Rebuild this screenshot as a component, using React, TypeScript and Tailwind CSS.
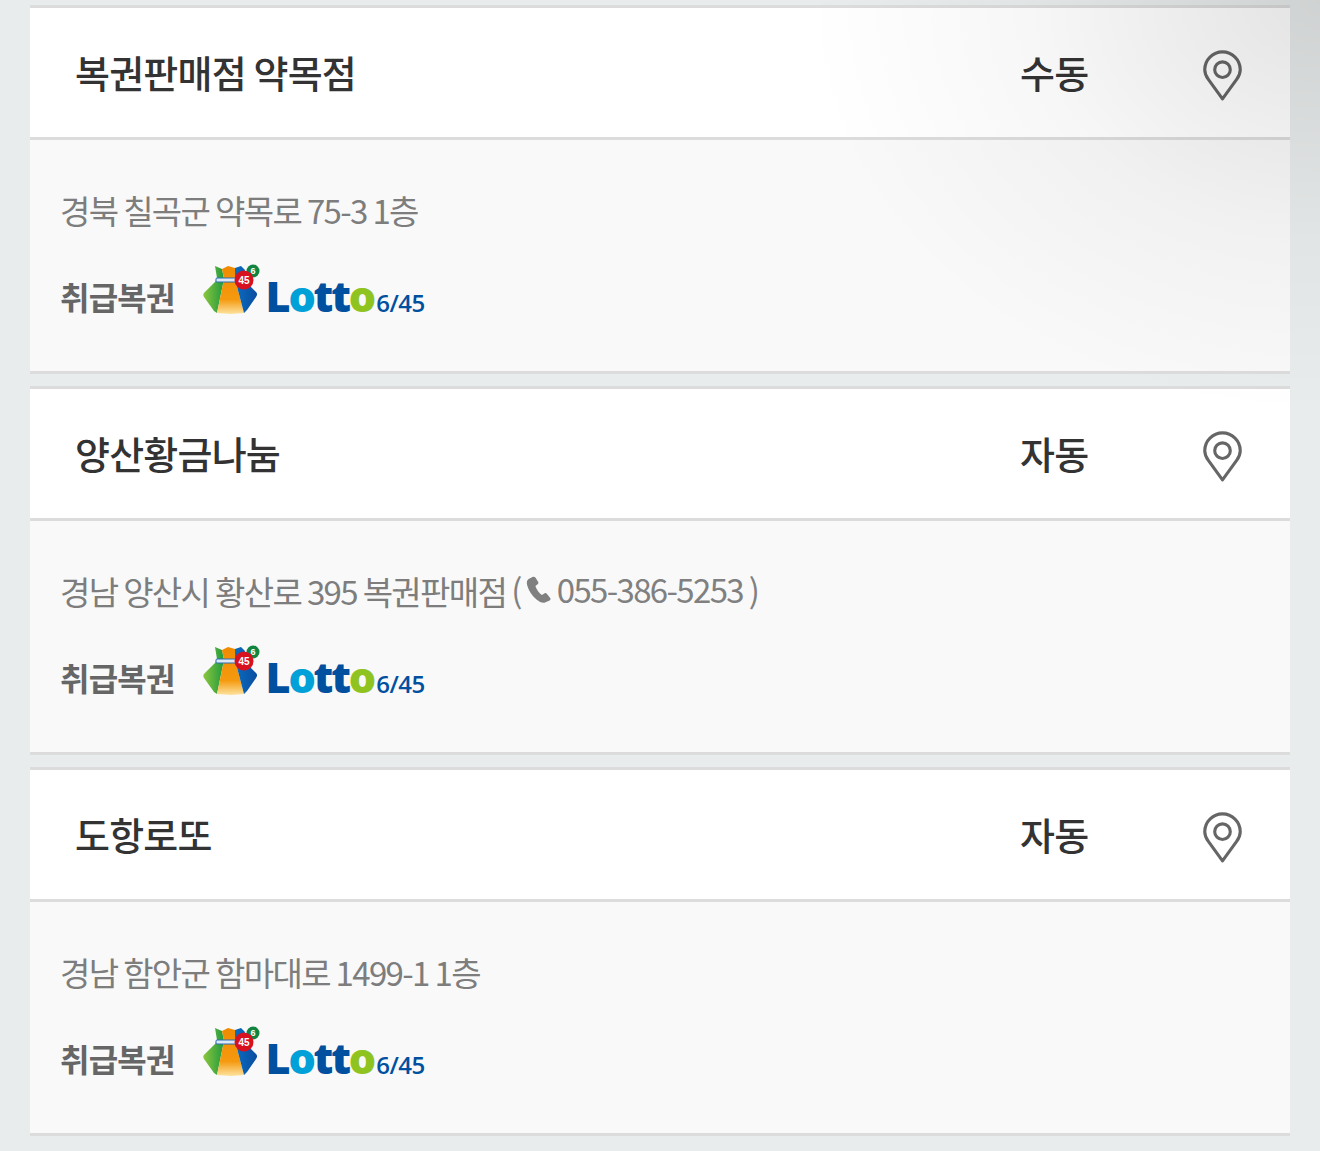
const stores = [
  {
    name: "복권판매점 약목점",
    type: "수동",
    address: "경북 칠곡군 약목로 75-3 1층",
  },
  {
    name: "양산황금나눔",
    type: "자동",
    address: "경남 양산시 황산로 395 복권판매점",
    phone: "055-386-5253",
  },
  {
    name: "도항로또",
    type: "자동",
    address: "경남 함안군 함마대로 1499-1 1층",
  },
];

const PinIcon = () => (
  <svg width="39" height="51" viewBox="0 0 40 52" fill="none" stroke="#666" strokeWidth="3.2">
    <path d="M20 50 L5.5 30 C3 26.5 1.8 23.5 1.8 20 C1.8 9.8 10 1.8 20 1.8 C30 1.8 38.2 9.8 38.2 20 C38.2 23.5 37 26.5 34.5 30 Z" strokeLinejoin="round" />
    <circle cx="20" cy="20" r="8" />
  </svg>
);

const PhoneIcon = () => (
  <svg width="26" height="28" viewBox="0 0 26 28" fill="#808080">
    <path d="M6.5 1 L2.6 3 C0.6 4.2 0.4 7 1.4 10 C3 15 6 19.5 10.5 23.5 C13.5 26 16.5 27.4 19 26.6 L23.6 24.4 C24.6 23.8 24.8 22.9 24.2 22 L20.8 17.8 C20.2 17 19.3 16.8 18.4 17.4 L15.8 19 C13 17.2 10.4 13.4 9.4 10 L11.6 8.2 C12.4 7.6 12.6 6.8 12.2 5.9 L9.6 1.8 C8.9 0.8 7.6 0.5 6.5 1 Z" />
  </svg>
);

const BagIcon = () => (
  <svg width="58" height="52" viewBox="0 0 58 52">
    <defs>
      <linearGradient id="bagGreen" x1="0" y1="0" x2="1" y2="0">
        <stop offset="0" stopColor="#8cc63f" />
        <stop offset="1" stopColor="#1f9a3c" />
      </linearGradient>
      <linearGradient id="bagOrange" x1="0" y1="0" x2="0" y2="1">
        <stop offset="0" stopColor="#f08a00" />
        <stop offset="0.7" stopColor="#f59a10" />
        <stop offset="1" stopColor="#fde3a0" />
      </linearGradient>
      <linearGradient id="bagBlue" x1="0" y1="0" x2="1" y2="0">
        <stop offset="0" stopColor="#0a6cc0" />
        <stop offset="1" stopColor="#0a4da0" />
      </linearGradient>
    </defs>
    <path d="M13 2 L20 5 L22 15 L15 49 L12 47 L2 33 C1 31 1 29.6 2.4 28.4 L13 18 L15 14 Z" fill="url(#bagGreen)" />
    <path d="M20 5 L26 2 L33 4 L33 15 L42 49 L29 50 L15 49 L22 15 Z" fill="url(#bagOrange)" />
    <path d="M33 4 L39 2 L43 6 L41 14 L44 18 L54 28 C55.4 29.4 55.4 31 54 33 L45 46 L42 49 L33 15 Z" fill="url(#bagBlue)" />
    <rect x="14" y="14" width="25" height="4" rx="1" fill="#dbe9f7" stroke="#2a6cb5" strokeWidth="1" />
    <circle cx="51" cy="7" r="6.5" fill="#11853f" />
    <text x="51" y="10" textAnchor="middle" fontSize="9" fontWeight="700" fill="#fff" fontFamily="Liberation Sans, sans-serif">6</text>
    <circle cx="42" cy="16" r="9.5" fill="#d7111f" />
    <text x="42" y="19.5" textAnchor="middle" fontSize="10" fontWeight="700" fill="#fff" fontFamily="Liberation Sans, sans-serif">45</text>
  </svg>
);

const LottoLogo = () => (
  <div className="flex items-end gap-[6px]">
    <BagIcon />
    <div className="mb-[-1px] flex items-baseline leading-none font-['Open_Sans',sans-serif] font-extrabold">
      <span className="text-[43px] tracking-[-2.2px] text-[#0050a0]">L</span>
      <span className="text-[43px] tracking-[-2.2px] text-[#00a0d8]">o</span>
      <span className="text-[43px] tracking-[-2.2px] text-[#0050a0]">tt</span>
      <span className="text-[43px] tracking-[-1px] text-[#8fc31f]">o</span>
      <span className="ml-[1px] text-[24px] font-semibold tracking-[-0.5px] text-[#0050a0]">6/45</span>
    </div>
  </div>
);

const StoreCard = ({ store }: { store: (typeof stores)[number] }) => (
  <div className="border-y-[3px] border-[#dcdcdc] bg-[#f9f9f9]">
    <div className="flex h-[132px] items-center border-b-[3px] border-[#dcdcdc] bg-white pl-[45px]">
      <h3 className="flex-1 pb-[2px] text-[38px] font-medium tracking-[-0.8px] text-[#333]">{store.name}</h3>
      <span className="w-[183px] pb-[2px] text-[38px] font-medium tracking-[-0.8px] text-[#333]">{store.type}</span>
      <div className="mt-[6px] mr-[47px] flex w-[40px]">
        <PinIcon />
      </div>
    </div>
    <div className="flex h-[231px] flex-col px-[31px] pt-[47px]">
      <p className="-ml-[1px] flex h-[48px] items-center text-[33px] font-normal tracking-[-1.65px] text-[#7d7d7d]">
        {store.address}
        {store.phone && (
          <span className="mb-[5px] ml-[5px] flex items-center text-[#808080]">
            (<span className="mx-[5px]"><PhoneIcon /></span>{store.phone} )
          </span>
        )}
      </p>
      <div className="mt-[27px] -ml-[1px] flex h-[56px] items-center gap-[27px]">
        <span className="mt-[12px] text-[32px] font-bold tracking-[-0.8px] text-[#666]">취급복권</span>
        <LottoLogo />
      </div>
    </div>
  </div>
);

export default function App() {
  return (
    <div className="relative h-[1151px] overflow-hidden bg-[#e9ecec] font-['Noto_Sans_CJK_KR','Noto_Sans',sans-serif] antialiased">
      <div className="flex flex-col gap-[12px] px-[30px] pt-[5px]">
        {stores.map((store) => (
          <StoreCard key={store.name} store={store} />
        ))}
      </div>
      {/* shadow that falls from the top right corner */}
      <div className="pointer-events-none absolute top-0 right-0 h-[420px] w-[520px] bg-[radial-gradient(ellipse_at_100%_0%,rgba(0,0,0,0.11)_0%,rgba(0,0,0,0.03)_40%,rgba(0,0,0,0)_70%)]" />
    </div>
  );
}
